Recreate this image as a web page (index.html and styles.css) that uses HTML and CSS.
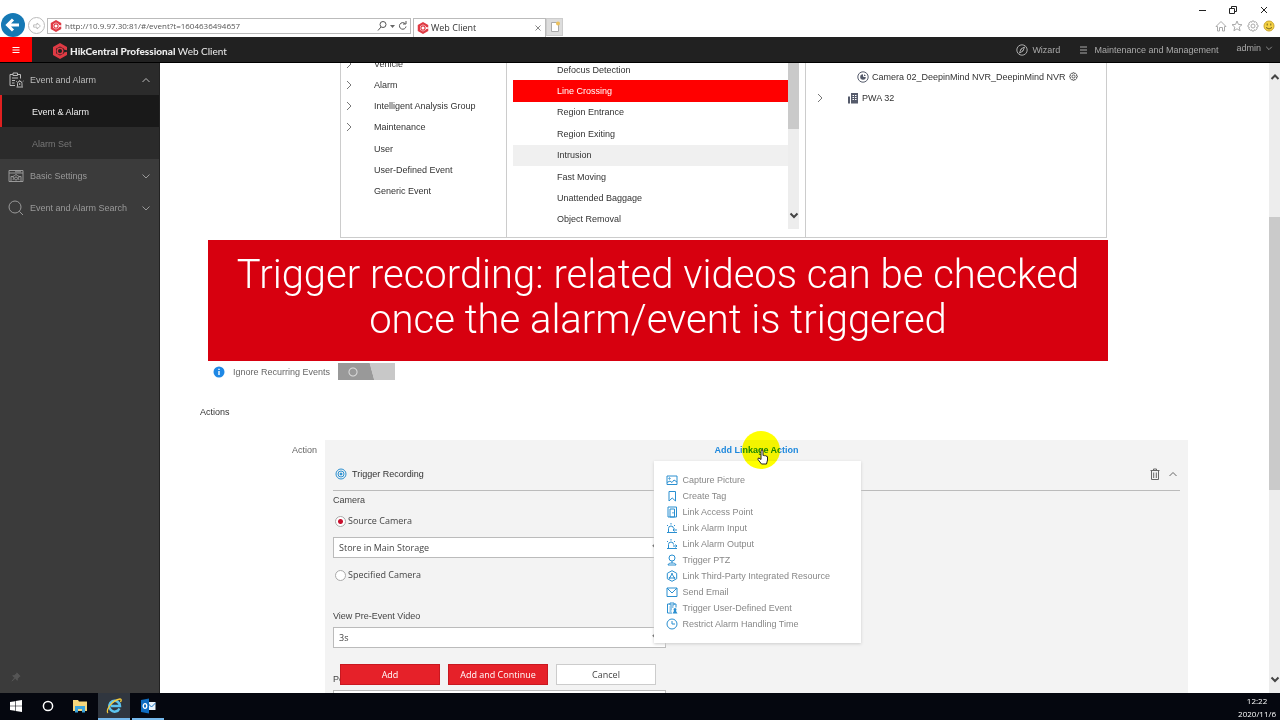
FILE: index.html
```html
<!DOCTYPE html>
<html lang="en">
<head>
    <meta charset="UTF-8">
    <meta name="viewport" content="width=device-width, initial-scale=1.0">
    <title>Web Client</title>
    <link rel="stylesheet" href="styles.css">
</head>
<body>
  <svg class="sprite" aria-hidden="true">
    <symbol id="logo" viewBox="0 0 16 16">
      <path d="M8 0l7 4v3.200l-3-.7V5.700L8 3.400 4 5.700v4.600l4 2.300 4-2.300v-.8l3-.7V12l-7 4-7-4V4z" fill="#e03a44"/>
      <circle cx="8" cy="8" r="2.800" fill="none" stroke="#e03a44" stroke-width="1.500"/>
    </symbol>
    <symbol id="up" viewBox="0 0 10 10"><path d="M1.500 7L5 3.500 8.500 7"/></symbol>
    <symbol id="down" viewBox="0 0 10 10"><path d="M1.500 3.500L5 7l3.500-3.500"/></symbol>
    <symbol id="right" viewBox="0 0 10 10"><path d="M3 1l4 4-4 4"/></symbol>
    <symbol id="gear" viewBox="0 0 12 12">
      <path d="M5 1h2l.4 1.300 1.200-.6 1.500 1.500-.6 1.200L11 5v2l-1.500.5.6 1.300-1.500 1.500-1.200-.6L7 11H5l-.5-1.300-1.300.6-1.400-1.500.6-1.300L1 7V5l1.400-.6-.6-1.200 1.400-1.500 1.300.6z"/>
      <circle cx="6" cy="6" r="2"/>
    </symbol>
  </svg>

  <!-- browser -->
  <div class="browser">
    <button type="button" class="back" aria-label="Back">
      <svg viewBox="0 0 24 24"><path d="M18 12H7M12 6.500L6.500 12l5.500 5.500"/></svg>
    </button>
    <button type="button" class="forward" aria-label="Forward">
      <svg viewBox="0 0 16 16"><path d="M3.500 6.500H8V4l4.500 4L8 12V9.500H3.500z"/></svg>
    </button>
    <div class="address">
      <svg class="logo"><use href="#logo"/></svg>
      <input type="text" aria-label="Address" value="http://10.9.97.30:81/#/event?t=1604636494657">
      <svg class="address-tools" viewBox="0 0 32 12">
        <circle cx="6" cy="4.500" r="3"/><path d="M4 7L1 10.500M28 3.500a3.300 3.300 0 1 0 1 3M29 1v3h-3"/>
        <path d="M13 5h5l-2.500 3z" fill="#666" stroke="none"/>
      </svg>
    </div>
    <div class="tab">
      <svg class="logo"><use href="#logo"/></svg>
      <span>Web Client</span>
      <button type="button" aria-label="Close tab"><svg viewBox="0 0 12 12"><path d="M3.500 3.500l5 5M8.500 3.500l-5 5"/></svg></button>
    </div>
    <button type="button" class="new-tab" aria-label="New tab">
      <svg viewBox="0 0 12 12"><path d="M2.500 1.500h5l2 2v7h-7z" fill="#fff" stroke="#aaa"/><circle cx="9" cy="2.500" r="2" fill="#ecc15c" stroke="none"/></svg>
    </button>
    <div class="window">
      <div class="window-buttons">
        <button type="button" aria-label="Minimize"><svg viewBox="0 0 12 12"><path d="M3 6.500h7"/></svg></button>
        <button type="button" aria-label="Restore"><svg viewBox="0 0 12 12"><path d="M2.500 4.500h5v5h-5zM4.500 4.500v-2h5v5h-2"/></svg></button>
        <button type="button" aria-label="Close"><svg viewBox="0 0 12 12"><path d="M3 3l6 6M9 3l-6 6"/></svg></button>
      </div>
      <div class="window-tools">
        <button type="button" aria-label="Home"><svg viewBox="0 0 12 12"><path d="M1 6.500L6 1.500l5 5H9.500V11h-2V7.500h-3V11h-2V6.500z"/></svg></button>
        <button type="button" aria-label="Favorites"><svg viewBox="0 0 12 12"><path d="M6 1l1.400 3.400 3.600.3-2.800 2.400.9 3.700L6 8.800l-3.100 2 .9-3.700L1 4.700l3.600-.3z"/></svg></button>
        <button type="button" aria-label="Tools"><svg><use href="#gear"/></svg></button>
        <button type="button" aria-label="Feedback"><svg viewBox="0 0 12 12"><circle cx="6" cy="6" r="5" fill="#f6d343" stroke="#c9a52e"/><path d="M4.200 3.500v2M7.800 3.500v2M3 7.500q3 3 6 0" stroke="#74601b"/></svg></button>
      </div>
    </div>
  </div>

  <!-- application header -->
  <header class="header">
    <button type="button" class="menu-button" aria-label="Menu">
      <svg viewBox="0 0 10 10"><path d="M1.500 2.500h7M1.500 5h7M1.500 7.500h7"/></svg>
    </button>
    <h1 class="brand"><svg><use href="#logo"/></svg><b>HikCentral Professional</b>&nbsp;Web Client</h1>
    <nav class="header-links">
      <a href="#wizard"><svg viewBox="0 0 12 12"><circle cx="6" cy="6" r="5.200"/><path d="M8.500 3L7 7 3.500 9 5 5zM5.500 5.500l1 1"/></svg>Wizard</a>
      <a href="#maintenance"><svg viewBox="0 0 12 12"><path d="M2 3h7M2 6h7M2 9h7"/></svg>Maintenance and Management</a>
      <a href="#admin" class="admin">admin <svg><use href="#down"/></svg></a>
    </nav>
  </header>

  <div class="main">
    <aside class="sidebar">
      <nav>
        <a href="#event" class="nav-item open">
          <svg class="nav-icon" viewBox="0 0 16 16"><path d="M5 2.500H2v11h5M9.500 2.500h3v4M5 1h4.500v2.500H5zM4 6h6M4 8.500h3M4 11h2.500M8.500 15h6.500M9.500 14.500V11.500a2 2 0 0 1 4.500 0v3M11.700 11v2M8 9l.8.700M15.500 9l-.8.700M11.700 8v.8"/></svg>
          <span>Event and Alarm</span>
          <svg class="arrow"><use href="#up"/></svg>
        </a>
        <a href="#event-alarm" class="sub-item active">Event &amp; Alarm</a>
        <a href="#alarm-set" class="sub-item">Alarm Set</a>
        <a href="#settings" class="nav-item">
          <svg class="nav-icon" viewBox="0 0 16 16"><path d="M1 2.500h14v11H1zM1 5h14M3 13V8.500h2M13 13V8.500h-2M6.500 7.500L8 6.500l1.500 1 1.500 1-.5 2 .5 1.500M5 12l.5-1.500-.5-2 1.500-1M7 3.800h6"/><circle cx="8" cy="10.500" r="1.500"/></svg>
          <span>Basic Settings</span>
          <svg class="arrow"><use href="#down"/></svg>
        </a>
        <a href="#search" class="nav-item">
          <svg class="nav-icon" viewBox="0 0 16 16"><circle cx="7" cy="7" r="6"/><path d="M11.300 11.300L15 15"/></svg>
          <span>Event and Alarm Search</span>
          <svg class="arrow"><use href="#down"/></svg>
        </a>
      </nav>
      <button type="button" class="pin" aria-label="Pin menu">
        <svg viewBox="0 0 12 12"><path d="M7 1l4 4-1 .5-2 2L7.500 10 5 7.500 1 11l3.500-4L2 4.500 4.500 4l2-2z"/></svg>
      </button>
    </aside>

    <main class="content">
      <div class="picker">
        <ul class="types">
          <li><svg><use href="#right"/></svg>Vehicle</li>
          <li><svg><use href="#right"/></svg>Alarm</li>
          <li><svg><use href="#right"/></svg>Intelligent Analysis Group</li>
          <li><svg><use href="#right"/></svg>Maintenance</li>
          <li>User</li>
          <li>User-Defined Event</li>
          <li>Generic Event</li>
        </ul>
        <div class="events">
          <ul>
            <li>Defocus Detection</li>
            <li class="selected">Line Crossing</li>
            <li>Region Entrance</li>
            <li>Region Exiting</li>
            <li class="hover">Intrusion</li>
            <li>Fast Moving</li>
            <li>Unattended Baggage</li>
            <li>Object Removal</li>
          </ul>
          <div class="scrollbar">
            <div class="thumb"></div>
            <svg><use href="#down"/></svg>
          </div>
        </div>
        <ul class="sources">
          <li class="camera">
            <svg class="device" viewBox="0 0 12 12"><circle cx="6" cy="6" r="5.200"/><circle cx="6" cy="6" r="2.800" fill="#555b6b" stroke="none"/><path d="M6.500 3v2.500H9" stroke="#fff"/></svg>
            Camera 02_DeepinMind NVR_DeepinMind NVR
            <svg class="small-gear"><use href="#gear"/></svg>
          </li>
          <li>
            <svg class="expand"><use href="#right"/></svg>
            <svg class="device" viewBox="0 0 12 12"><path d="M4 1h7v10.500H4zM1 4.500h2v7H1z" fill="#555b6b" stroke="none"/><path d="M5.500 3.500h4M5.500 5.500h4M5.500 7.500h4" stroke="#fff"/><path d="M7.500 2v9" stroke="#555b6b"/></svg>
            PWA 32
          </li>
        </ul>
      </div>

      <p class="caption">Trigger recording: related videos can be checked once the alarm/event is triggered</p>

      <div class="ignore">
        <svg viewBox="0 0 12 12"><circle cx="6" cy="6" r="5.500" fill="#1e88e5" stroke="none"/><path d="M6 5v4M6 2.700v1.300" stroke="#fff" stroke-width="1.400"/></svg>
        <label for="ignore">Ignore Recurring Events</label>
        <input type="checkbox" id="ignore" class="toggle">
      </div>

      <h2 class="title">Actions</h2>

      <div class="action-row">
        <span class="action-label">Action</span>
        <section class="panel">
          <div class="linkage">
            <button type="button" class="add-linkage">Add Linkage Action</button>
            <ul class="linkage-menu">
              <li><button type="button"><svg viewBox="0 0 12 12"><path d="M1 2h10v8.500H1zM1 8.500l3-1.500 2 1.500 2-2.500 3 2"/><circle cx="3.500" cy="4.500" r=".7"/></svg>Capture Picture</button></li>
              <li><button type="button"><svg viewBox="0 0 12 12"><path d="M3 1.500h6.500V11L6.200 8 3 11z"/></svg>Create Tag</button></li>
              <li><button type="button"><svg viewBox="0 0 12 12"><path d="M2 1h8.500v10H2zM4 3h4.500v8H4zM7 6v1.500"/></svg>Link Access Point</button></li>
              <li><button type="button"><svg viewBox="0 0 12 12"><path d="M1 10.500h10M2.500 10V6.500a2.500 2.500 0 0 1 5 0M5 1v1.500M1 3l1 1M9 3L8 4M11 8H7M8.500 6.500L7 8l1.500 1.500"/></svg>Link Alarm Input</button></li>
              <li><button type="button"><svg viewBox="0 0 12 12"><path d="M1 10.500h10M2.500 10V6.500a2.500 2.500 0 0 1 5 0M5 1v1.500M1 3l1 1M9 3L8 4M7 8h4M9.500 6.500L11 8 9.500 9.500"/></svg>Link Alarm Output</button></li>
              <li><button type="button"><svg viewBox="0 0 12 12"><circle cx="6" cy="4" r="3"/><path d="M6 7v2M2 11c0-1.500 2-2 4-2s4 .5 4 2z"/></svg>Trigger PTZ</button></li>
              <li><button type="button"><svg viewBox="0 0 12 12"><path d="M6 .7l4.700 2.600v5.400L6 11.300 1.300 8.700V3.300zM6 4L3.500 8h5z"/><circle cx="6" cy="3.800" r=".5"/><circle cx="3.500" cy="8" r=".5"/><circle cx="8.500" cy="8" r=".5"/></svg>Link Third-Party Integrated Resource</button></li>
              <li><button type="button"><svg viewBox="0 0 12 12"><path d="M1 2h10v8.500H1zM1 2l5 5 5-5"/></svg>Send Email</button></li>
              <li><button type="button"><svg viewBox="0 0 12 12"><path d="M4 2H1.500v9H6M8 2h2v3.500M4 1h4v2H4zM3.500 5h4M3.500 7h2.500M3.500 9h2"/><path d="M7.500 7.500a1.500 1.500 0 1 1 3 0L10 9l1.500 2.500h-5L8 9z" fill="#2a8fd0" stroke="none"/></svg>Trigger User-Defined Event</button></li>
              <li><button type="button"><svg viewBox="0 0 12 12"><circle cx="6" cy="6" r="5"/><path d="M6 3v3h3"/></svg>Restrict Alarm Handling Time</button></li>
            </ul>
            <div class="click-spot"></div>
            <svg class="pointer" viewBox="0 0 12 16"><path d="M4 9V2q0-1 1-1t1 1v4.500q1-.8 1.500.3 1-.6 1.500.4 1.500-.4 1.500.8v3L9.500 15h-5L1 10.500Q.5 9 2 9l2 1.500z" fill="#fff" stroke="#222"/></svg>
          </div>

          <div class="panel-head">
            <svg class="record" viewBox="0 0 12 12"><circle cx="6" cy="6" r="5"/><circle cx="6" cy="6" r="3"/><circle cx="6" cy="6" r="1" fill="#2a8fd0"/></svg>
            <h3>Trigger Recording</h3>
            <button type="button" aria-label="Delete"><svg viewBox="0 0 12 12"><path d="M1.500 2.500h9M4.500 2.500V1h3v1.500M2.500 2.500v9h7v-9M4.700 4.500v5.500M7.300 4.500v5.500"/></svg></button>
            <button type="button" aria-label="Collapse"><svg class="arrow"><use href="#up"/></svg></button>
          </div>

          <form class="fields">
            <p>Camera</p>
            <label class="radio"><input type="radio" name="camera" checked>Source Camera</label>
            <select aria-label="Storage"><option>Store in Main Storage</option></select>
            <label class="radio"><input type="radio" name="camera">Specified Camera</label>
            <label class="field-label" for="pre">View Pre-Event Video</label>
            <select id="pre"><option>3s</option></select>
            <label class="field-label" for="post">Post-Record</label>
            <select id="post"><option>5s</option></select>
          </form>
        </section>
      </div>

      <div class="buttons">
        <button type="button" class="primary">Add</button>
        <button type="button" class="primary">Add and Continue</button>
        <button type="button">Cancel</button>
      </div>
    </main>

    <div class="scrollbar page-scroll">
      <svg><use href="#up"/></svg>
      <div class="thumb"></div>
      <svg><use href="#down"/></svg>
    </div>
  </div>

  <!-- taskbar -->
  <footer class="taskbar">
    <button type="button" aria-label="Start"><svg viewBox="0 0 12 12"><path d="M0 2l5-.8v4.500H0zM5.600 1.100L12 0v5.700H5.600zM0 6.300h5v4.500L0 10zM5.600 6.300H12V12l-6.400-1z" fill="#fff"/></svg></button>
    <button type="button" aria-label="Cortana"><svg viewBox="0 0 12 12"><circle cx="6" cy="6" r="4.600" fill="none" stroke="#fff" stroke-width="1.500"/></svg></button>
    <button type="button" aria-label="File Explorer"><svg class="wide" viewBox="0 0 16 14"><path d="M1 1h5l1 1.500h8V12H1z" fill="#f5d67b"/><path d="M3 7h10v6.500h-3V10H6v3.500H3z" fill="#3ba4dc"/></svg></button>
    <button type="button" class="current" aria-label="Internet Explorer"><svg class="wide" viewBox="0 0 16 16"><path d="M13.500 10.500A5.400 5.400 0 1 1 14 8H5" fill="none" stroke="#5cc4ee" stroke-width="2.500"/><path d="M2 15C-1 13 6 2 14 1c2 0 1 2 .5 3" fill="none" stroke="#f3c93d" stroke-width="1.300"/></svg></button>
    <button type="button" class="running" aria-label="Outlook"><svg class="wide" viewBox="0 0 16 16"><path d="M8 4h7.500v8H8z" fill="#e8f2fb"/><path d="M8.500 6l3 3 4-4" fill="none" stroke="#1673c4"/><path d="M1 2l8-1.500v15L1 14z" fill="#0f6cc0"/><ellipse cx="5" cy="8" rx="1.800" ry="2.300" fill="none" stroke="#fff" stroke-width="1.300"/></svg></button>
    <div class="clock"><time>12:22</time><span>2020/11/6</span></div>
  </footer>
</body>
</html>
```
FILE: styles.css
```css
* {
    box-sizing: border-box;
}

body {
    display: flex;
    flex-direction: column;
    height: 100vh;
    margin: 0;
    overflow: hidden;
    background: #fff;
    font: 9px/16px "Liberation Sans", Arial, sans-serif;
    color: #444;
}

h1,
h2,
h3,
p,
ul {
    margin: 0;
    padding: 0;
    font-size: inherit;
    font-weight: normal;
    list-style: none;
}

button {
    display: flex;
    align-items: center;
    justify-content: center;
    padding: 0;
    border: 0;
    background: none;
    font: inherit;
    color: inherit;
}

a {
    color: inherit;
    text-decoration: none;
}

svg {
    flex: none;
    width: 12px;
    height: 12px;
    fill: none;
    stroke: currentColor;
}

.sprite {
    position: absolute;
    width: 0;
    height: 0;
}

/* browser */
.browser {
    display: flex;
    align-items: flex-end;
    height: 37px;
    font-family: "Open Sans", "Noto Sans", sans-serif;
    color: #555;
}

.back {
    width: 24px;
    height: 24px;
    margin: 0 3px 0 1px;
    border-radius: 50%;
    background: #1679b5;
    color: #fff;
}

.back svg {
    width: 24px;
    height: 24px;
    stroke-width: 3;
}

.forward {
    width: 17px;
    height: 17px;
    margin: 0 2px 3px 0;
    border: 1px solid #bbb;
    border-radius: 50%;
    color: #aaa;
}

.address {
    display: flex;
    align-items: center;
    flex: 0 1 364px;
    height: 16px;
    margin-bottom: 3px;
    padding: 0 1px 0 2px;
    border: 1px solid #bbb;
}

.logo {
    width: 12px;
    height: 12px;
    stroke: none;
}

.address input {
    flex: 1;
    min-width: 0;
    padding: 0 3px;
    border: 0;
    outline: 0;
    background: none;
    font: 8px/14px "Open Sans", sans-serif;
    color: #555;
}

.address-tools {
    width: 32px;
}

.tab {
    display: flex;
    align-items: center;
    gap: 2px;
    flex: 0 1 133px;
    height: 19px;
    margin-left: 2px;
    padding: 0 1px 0 3px;
    border: 1px solid #bbb;
    border-bottom: 0;
    color: #333;
}

.tab span {
    flex: 1;
}

.tab button {
    color: #888;
}

.new-tab {
    width: 17px;
    height: 18px;
    margin-bottom: 1px;
    border: 1px solid #ccc;
    background: #ddd;
}

.window {
    margin-left: auto;
    padding-right: 5px;
}

.window-buttons,
.window-tools {
    display: flex;
    justify-content: flex-end;
}

.window-buttons {
    gap: 19px;
    padding: 0 5px 4px 0;
    color: #222;
}

.window-tools {
    gap: 4px;
    padding-bottom: 5px;
    color: #aaa;
}

/* application header */
.header {
    display: flex;
    align-items: stretch;
    height: 26px;
    border-bottom: 1px solid #000;
    background: #212121;
    color: #aaa;
}

.menu-button {
    width: 32px;
    background: #f00;
    color: #fff;
}

.menu-button svg {
    width: 10px;
    height: 10px;
}

.brand {
    display: flex;
    align-items: center;
    margin-left: 20px;
    padding-top: 2px;
    font: 10px/16px Lato, sans-serif;
    color: #eee;
}

.brand b {
    font-weight: 900;
}

.brand svg {
    width: 16px;
    height: 16px;
    margin-right: 2px;
    stroke: none;
}

.header-links {
    display: flex;
    gap: 18px;
    margin-left: auto;
    padding-right: 7px;
}

.header-links a {
    display: flex;
    align-items: center;
    gap: 4px;
}

.header-links .admin {
    padding-bottom: 3px;
}

.admin svg {
    width: 8px;
    height: 8px;
}

.main {
    display: flex;
    flex: 1;
    min-height: 0;
}

/* sidebar */
.sidebar {
    display: flex;
    flex-direction: column;
    justify-content: space-between;
    width: 160px;
    border-right: 1px solid #222;
    background: #3b3b3b;
    color: #999;
}

.nav-item,
.sub-item {
    display: flex;
    align-items: center;
    height: 32px;
    padding-top: 1px;
}

.nav-item {
    gap: 6px;
    padding-right: 8px;
    padding-left: 8px;
}

.nav-item span {
    flex: 1;
}

.nav-item.open {
    background: #2b2b2b;
    color: #bbb;
}

.nav-icon {
    width: 16px;
    height: 16px;
}

.arrow {
    width: 10px;
    height: 10px;
}

.sub-item {
    padding-left: 30px;
    border-left: 2px solid transparent;
    background: #2b2b2b;
    color: #777;
}

.sub-item.active {
    border-left-color: #e02020;
    background: #191919;
    color: #eee;
}

.pin {
    width: 32px;
    height: 32px;
    color: #555;
}

.pin svg {
    width: 10px;
    height: 10px;
    fill: currentColor;
}

/* content */
.content {
    position: relative;
    flex: 1;
    min-width: 0;
    overflow: hidden;
}

.picker {
    display: grid;
    grid-template-columns: 165px 1fr 1fr;
    height: 175px;
    margin: 0 162px 0 180px;
    overflow: hidden;
    border: 1px solid #ccc;
    border-top: 0;
    color: #333;
}

.picker li {
    display: flex;
    align-items: center;
}

.types {
    display: grid;
    grid-auto-rows: 1fr;
    height: 149px;
    margin-top: -10px;
}

.types li {
    padding-left: 33px;
}

.types svg {
    width: 10px;
    height: 10px;
    margin: 0 20px 0 -30px;
    color: #777;
}

.events {
    display: flex;
    padding: 0 6px;
    border: 1px solid #ccc;
    border-width: 0 1px;
}

.events ul {
    display: grid;
    flex: 1;
    grid-auto-rows: 1fr;
    height: 171px;
    margin-top: -4px;
}

.events li {
    padding-left: 44px;
}

.events .hover {
    background: #f0f0f0;
}

.events .selected {
    background: #f00;
    color: #fff;
}

.scrollbar {
    display: flex;
    flex-direction: column;
    align-items: center;
    width: 11px;
    background: #ededed;
    color: #444;
}

.scrollbar svg {
    width: 10px;
    height: 10px;
    stroke-width: 2;
}

.scrollbar .thumb {
    align-self: stretch;
    background: #cacaca;
}

.events .scrollbar {
    justify-content: space-between;
    height: 166px;
    padding-bottom: 9px;
}

.events .thumb {
    height: 66px;
}

.sources {
    padding: 3px 0 0 9px;
}

.sources li {
    gap: 3px;
    height: 21px;
}

.sources .camera {
    padding-left: 42px;
}

.sources .device {
    color: #555b6b;
}

.sources .expand {
    width: 10px;
    height: 10px;
    margin-right: 19px;
    color: #777;
}

.sources .small-gear {
    width: 9px;
    height: 9px;
}

.caption {
    margin: 2px 161px 2px 48px;
    padding: 12px 24px 19px;
    background: #d7000f;
    font: 300 40px/45px Roboto, sans-serif;
    text-align: center;
    color: #fff;
}

.ignore {
    display: flex;
    align-items: center;
    height: 17px;
    margin-left: 53px;
    color: #666;
}

.ignore label {
    margin: 0 8px;
}

.toggle {
    appearance: none;
    width: 57px;
    height: 17px;
    margin: 0;
    background: radial-gradient(circle at 15px 9px, transparent 3px, #ddd 4px, transparent 5px), linear-gradient(75deg, #999 58%, #c8c8c8 59%);
}

.title {
    margin: 24px 0 20px 40px;
    color: #333;
}

.action-row {
    display: flex;
    margin-right: 81px;
}

.action-label {
    width: 165px;
    padding: 2px 8px 0 0;
    text-align: right;
    color: #666;
}

/* action panel */
.panel {
    flex: 1;
    padding: 2px 8px 24px;
    background: #f3f3f3;
}

.linkage {
    position: relative;
    display: flex;
    justify-content: center;
    height: 16px;
}

.add-linkage {
    font-weight: bold;
    color: #1e88dd;
}

.linkage-menu {
    position: absolute;
    top: 19px;
    left: calc(50% - 103px);
    z-index: 1;
    width: 207px;
    padding: 11px 12px;
    background: #fff;
    box-shadow: 0 1px 3px #ccc;
    color: #888;
}

.linkage-menu button {
    gap: 5px;
    height: 16px;
    white-space: nowrap;
}

.linkage-menu svg,
.record {
    color: #2a8fd0;
}

.click-spot {
    position: absolute;
    top: -11px;
    left: calc(50% - 15px);
    z-index: 2;
    width: 38px;
    height: 38px;
    border-radius: 50%;
    background: #ffff00;
    mix-blend-mode: multiply;
}

.pointer {
    position: absolute;
    top: 7px;
    left: 50%;
    z-index: 3;
    width: 12px;
    height: 16px;
}

.panel-head {
    display: flex;
    align-items: center;
    gap: 7px;
    height: 33px;
    padding: 0 2px;
    border-bottom: 1px solid #bbb;
    color: #666;
}

.panel-head h3 {
    flex: 1;
    color: #333;
}

.panel-head .record {
    margin-right: -2px;
}

.fields {
    width: 333px;
}

.fields p {
    padding-top: 1px;
}

.radio {
    display: flex;
    align-items: center;
    gap: 2px;
    height: 20px;
    margin: 3px 0 6px;
    font-family: "Open Sans", sans-serif;
}

.radio input {
    appearance: none;
    width: 11px;
    height: 11px;
    margin: 0 0 0 2px;
    border: 1px solid #aaa;
    border-radius: 50%;
    background: #fff;
}

.radio input:checked {
    background: radial-gradient(#c8102e 2px, #fff 3px);
}

.fields select {
    display: block;
    width: 100%;
    height: 21px;
    padding: 0 1px;
    border: 1px solid #bbb;
    border-radius: 0;
    background: #fff;
    font: 9px/16px "Open Sans", sans-serif;
    color: #444;
}

.fields select + .radio {
    margin: 7px 0 21px;
}

.field-label {
    display: block;
    margin: 23px 0 3px;
}

.buttons {
    position: absolute;
    bottom: 8px;
    left: 180px;
    display: flex;
    gap: 8px;
}

.buttons button {
    width: 100px;
    height: 21px;
    border: 1px solid #ccc;
    background: #fff;
    font-family: "Open Sans", sans-serif;
}

.buttons .primary {
    border-color: #c81820;
    background: #e62129;
    color: #fff;
}

.page-scroll {
    padding: 9px 0;
}

.page-scroll .thumb {
    height: 273px;
    margin: 135px 0 auto;
}

/* taskbar */
.taskbar {
    display: flex;
    height: 27px;
    background: #05070f;
    color: #fff;
}

.taskbar button {
    width: 32px;
    border-bottom: 2px solid transparent;
}

.taskbar svg {
    stroke: none;
}

.taskbar .wide {
    width: 16px;
    height: 16px;
}

.taskbar .current {
    margin: 0 2px;
    border-color: #76b9ed;
    background: #30363f;
}

.taskbar .running {
    border-color: #76b9ed;
}

.clock {
    display: flex;
    flex-direction: column;
    align-items: center;
    margin-left: auto;
    padding: 1px 4px 0;
    font: 8px/13px "Open Sans", sans-serif;
}
```
